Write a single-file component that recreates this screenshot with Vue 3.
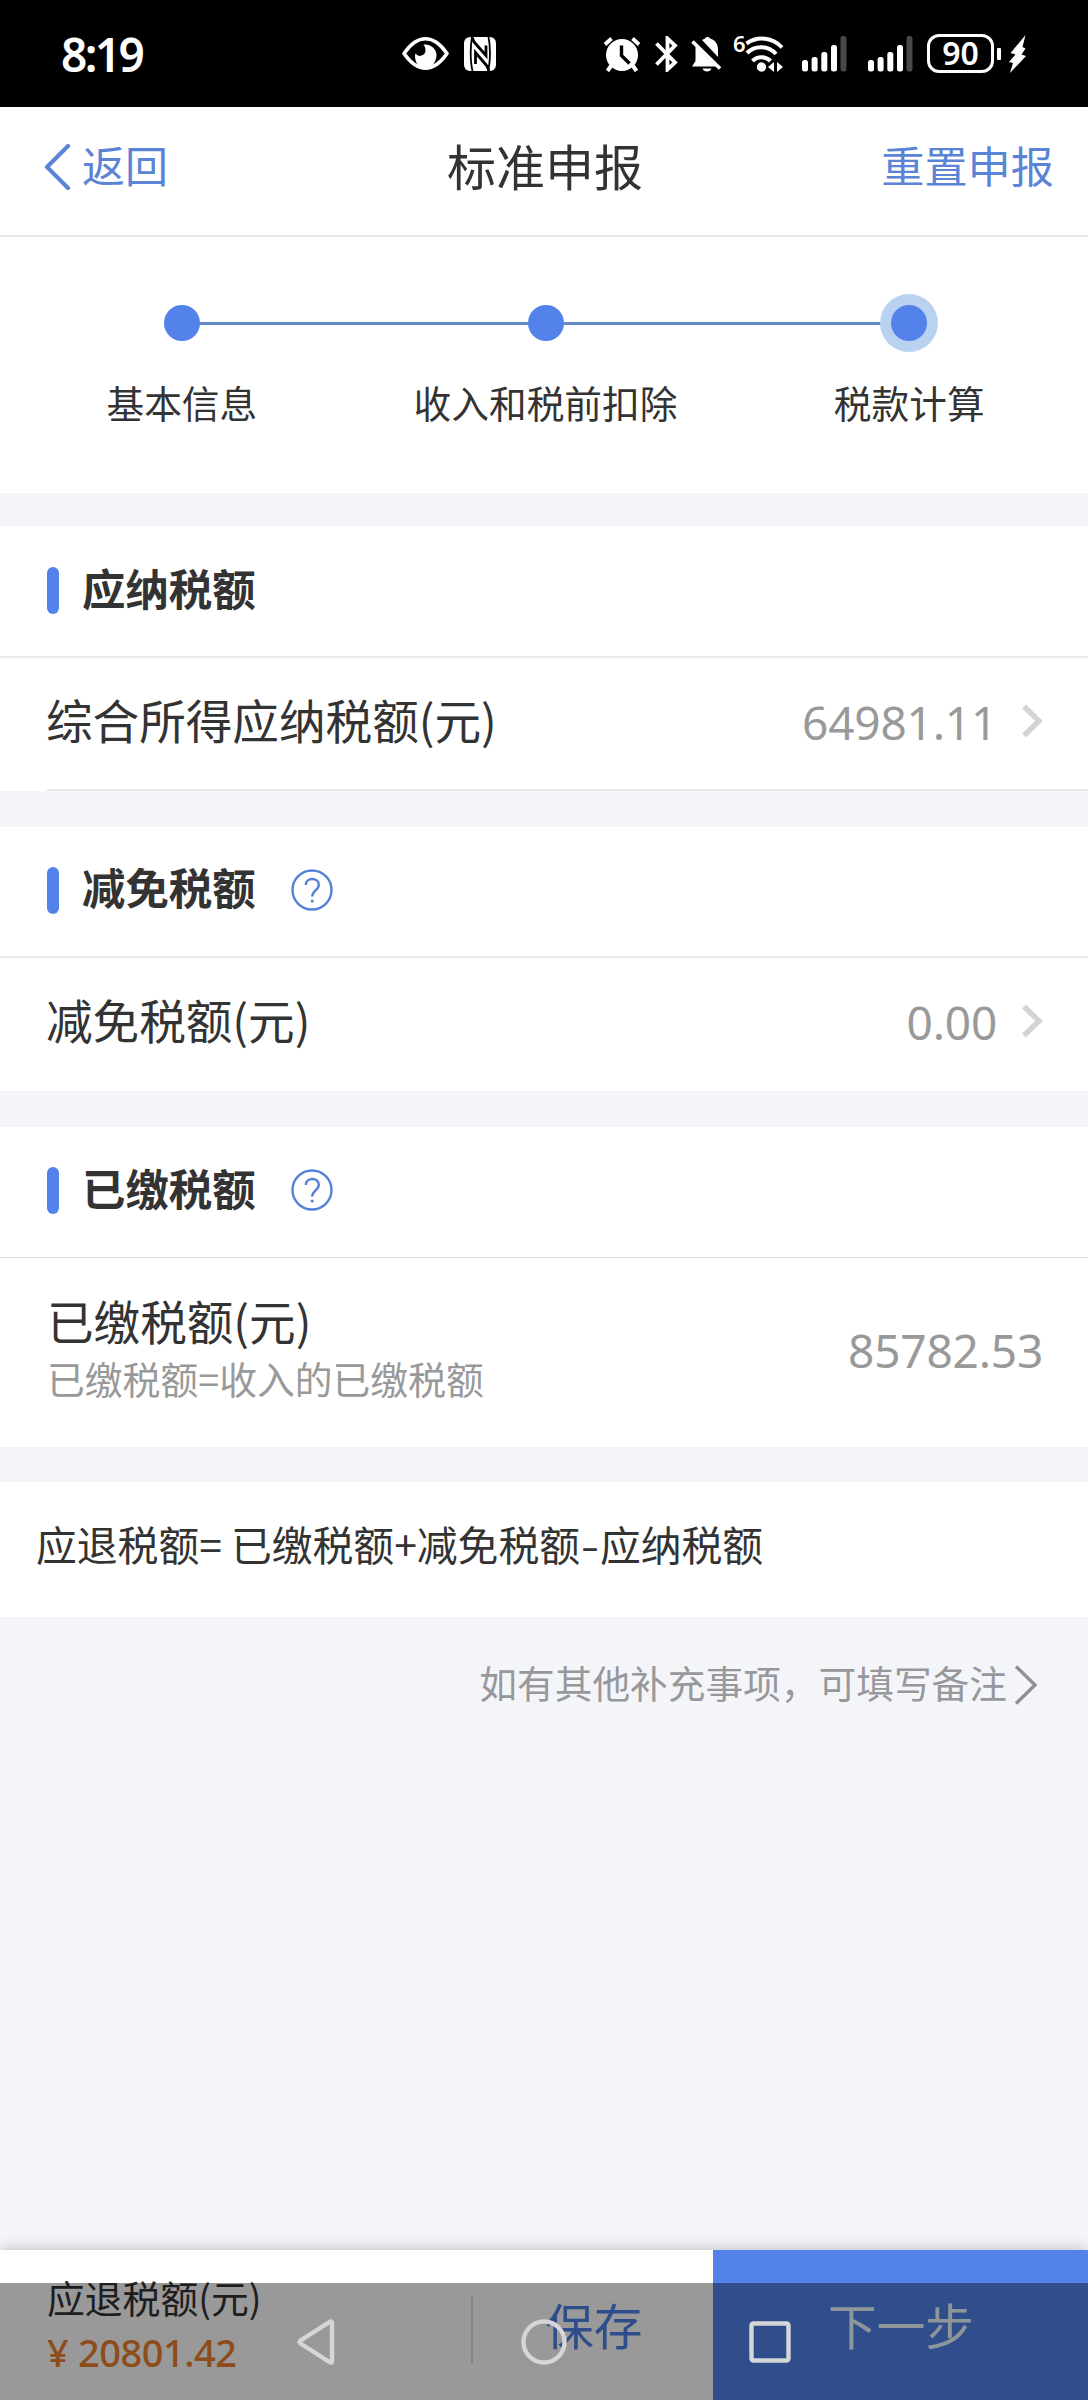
<script setup>
const steps = [
  { label: '基本信息', current: false },
  { label: '收入和税前扣除', current: false },
  { label: '税款计算', current: true },
]

const sections = [
  { title: '应纳税额', help: false, label: '综合所得应纳税额(元)', value: '64981.11', link: true, kind: 'payable' },
  { title: '减免税额', help: true, label: '减免税额(元)', value: '0.00', link: true, kind: 'relief' },
  { title: '已缴税额', help: true, label: '已缴税额(元)', hint: '已缴税额=收入的已缴税额', value: '85782.53', link: false, kind: 'paid' },
]

const signals = [1, 2]
const bars = [
  { x: 0, y: 24 },
  { x: 9.6, y: 21 },
  { x: 19.3, y: 16 },
  { x: 29, y: 9 },
]
</script>

<template>
  <div class="screen">
    <div class="status">
      <span class="clock">8:19</span>
      <svg class="eye" width="47" height="35" viewBox="0 0 47 35">
        <path d="M2 17.500C10 6 17 2.800 23.500 2.800S37 6 45 17.500C37 29 30 32.200 23.500 32.200S10 29 2 17.500Z" fill="none" stroke="#fff" stroke-width="3.600" stroke-linejoin="round" />
        <path d="M22.500 8.500a11 11 0 0 1 12 10.500c0 6-4 13-11 13s-10.500-5-10.500-12.500l.5-2a5.500 5.500 0 0 0 10-3c0-3-1-4.500-2-6Z" fill="#fff" />
      </svg>
      <svg class="nfc" width="32" height="34" viewBox="0 0 32 34">
        <rect width="32" height="34" rx="6" fill="#fff" />
        <path d="M8 0C6.200 9 6.200 25 8.500 34M24.500 0c2 9 2 25-.5 34" fill="none" stroke="#000" stroke-width="1.800" />
        <path d="M8 0l2 5 12 13.500V8.500M25 34l-2-5L11.500 15.500V27" fill="none" stroke="#000" stroke-width="2.800" />
      </svg>
      <svg class="alarm" width="38" height="36" viewBox="0 0 38 36">
        <path d="M2 8.500 8.500 2.500M36 8.500 29.500 2.500" stroke="#fff" stroke-width="3.800" />
        <path d="M8 30l-3.500 5M30 30l3.500 5" stroke="#fff" stroke-width="4" />
        <circle cx="19" cy="19" r="16" fill="#fff" />
        <path d="M18.500 9.500v10l8 8" fill="none" stroke="#000" stroke-width="3.400" />
      </svg>
      <svg class="bt" width="23" height="36" viewBox="0 0 23 36">
        <path d="M1.500 7.500 20 26.500 12.500 33.500V2.500L20 9.500 1.500 28.500" fill="none" stroke="#fff" stroke-width="3.800" />
      </svg>
      <svg class="bell" width="31" height="36" viewBox="0 0 31 36">
        <path d="M4.500 10.500 25 30.500H1l3.500-5.500ZM11 4l3-1.500C15 .5 18 .5 19 2.500c6 2 8 6 8 11V21ZM11.500 32.500h9c-1 4-8 4-9 0Z" fill="#fff" />
        <path d="M1.500 5.500 29 32.500" stroke="#fff" stroke-width="3.600" />
      </svg>
      <span class="gen">6</span>
      <svg class="wifi" width="39" height="36" viewBox="0 0 39 36">
        <g fill="none" stroke="#fff" stroke-width="4">
          <path d="M1.500 7.500a27 27 0 0 1 35.500 4" />
          <path d="M2 17a20 20 0 0 1 29 1" />
          <path d="M7.500 25a12.500 12.500 0 0 1 18 0" />
        </g>
        <circle cx="16.500" cy="31" r="4.700" fill="#fff" />
        <path d="M29 26v10l-6-5ZM32 26v10l6-5Z" fill="#fff" />
      </svg>
      <svg v-for="s in signals" :key="s" class="signal" :class="'sim' + s" width="45" height="36" viewBox="0 0 45 36">
        <rect v-for="b in bars" :key="b.x" :x="b.x" :y="b.y" width="6" :height="35.5 - b.y" rx="2.500" fill="#fff" />
        <rect x="38.500" y="0" width="6" height="35.500" rx="2.500" fill="#484848" />
      </svg>
      <span class="battery">90</span>
      <span class="cap"></span>
      <svg class="bolt" width="17" height="38" viewBox="0 0 17 38">
        <path d="M16.500 0 1.500 18l5 1.500L0 27l4 1L1 38 17 21l-4.500-1.500 4-6-3-1.500Z" fill="#fff" />
      </svg>
    </div>

    <header class="bar">
      <div class="back">
        <svg width="27" height="46" viewBox="0 0 27 46"><path d="M24 2 3 23l21 21" fill="none" stroke="#5b84d6" stroke-width="4.200" stroke-linecap="round" stroke-linejoin="round" /></svg>
        <span>返回</span>
      </div>
      <h1>标准申报</h1>
      <span class="reset">重置申报</span>
    </header>

    <div class="steps">
      <div v-for="s in steps" :key="s.label" class="step" :class="{ current: s.current }">
        <div class="track"><i class="dot"></i></div>
        <span class="step-label">{{ s.label }}</span>
      </div>
    </div>

    <section v-for="s in sections" :key="s.kind" class="card" :class="s.kind">
      <h2>
        <i class="mark"></i><span>{{ s.title }}</span>
        <svg v-if="s.help" class="help" width="42" height="42" viewBox="0 0 42 42" fill="none" stroke="#5482d8">
          <circle cx="21" cy="21" r="19.500" stroke-width="2.400" />
          <path d="M14.800 16c0-8 13-8 13 0 0 5-6.600 6-6.600 11.500" stroke-width="2.400" />
          <circle cx="21.200" cy="32" r="1.600" fill="#5482d8" stroke="none" />
        </svg>
      </h2>
      <div class="row">
        <div class="names">
          <div class="name">{{ s.label }}</div>
          <div v-if="s.hint" class="hint">{{ s.hint }}</div>
        </div>
        <span class="num">{{ s.value }}</span>
        <svg v-if="s.link" class="go" width="21" height="34" viewBox="0 0 21 34"><path d="M2 2.500 17 17 2 31.500" fill="none" stroke="#d3d3d3" stroke-width="5.400" /></svg>
      </div>
    </section>

    <div class="formula">应退税额= 已缴税额+减免税额<span class="minus">-</span>应纳税额</div>

    <div class="note">
      <span>如有其他补充事项，可填写备注</span>
      <svg width="24" height="40" viewBox="0 0 24 40"><path d="M2 1.500 21 20 2 38.500" fill="none" stroke="#8f9093" stroke-width="3.400" /></svg>
    </div>

    <footer class="footer">
      <div class="total">
        <div class="total-label">应退税额(元)</div>
        <div class="total-num"><span class="yen">¥</span>20801.42</div>
      </div>
      <i class="split"></i>
      <div class="save">保存</div>
      <div class="next">下一步</div>
    </footer>

    <nav class="sysnav">
      <svg class="n-back" width="40" height="48" viewBox="0 0 40 48"><path d="M36 4.600v38.800c0 1-1 1.500-2 1L4.500 25.500c-1.200-.8-1.200-2.200 0-3L34 3.600c1-.5 2 0 2 1Z" /></svg>
      <svg class="n-home" width="46" height="48" viewBox="0 0 46 48"><circle cx="23" cy="24" r="20.500" /></svg>
      <svg class="n-recent" width="42" height="48" viewBox="0 0 42 48"><rect x="2.500" y="5.500" width="37" height="37" rx="2" /></svg>
    </nav>
  </div>
</template>

<style>
body {
  margin: 0;
}
</style>

<style scoped>
.screen {
  position: relative;
  display: flex;
  flex-direction: column;
  width: 1088px;
  height: 2400px;
  overflow: hidden;
  background: #f4f5f9;
  color: #333;
  font-family: "Noto Sans CJK SC", "Noto Sans", sans-serif;
}
.status {
  display: flex;
  align-items: flex-start;
  height: 107px;
  flex: none;
  box-sizing: border-box;
  padding: 36px 0 0 61px;
  background: #000;
  color: #fff;
  font-family: "Noto Sans", sans-serif;
}
.status > * {
  flex: none;
}
.clock {
  width: 341px;
  margin-top: -5px;
  font-size: 46px;
  font-weight: 600;
  line-height: 46px;
  letter-spacing: -2.600px;
}
.nfc {
  margin: 1px 1px 0 15px;
}
.alarm {
  margin-left: 106px;
}
.bt {
  margin-left: 14px;
}
.bell {
  margin-left: 13px;
}
.gen {
  width: 11px;
  margin: -4px 0 0 11px;
  font-size: 22px;
  font-weight: 600;
  line-height: 22px;
}
.wifi {
  margin-left: 1px;
}
.sim1 {
  margin-left: 18px;
}
.sim2 {
  margin-left: 21px;
}
.battery {
  width: 67px;
  height: 39px;
  margin: -2px 0 0 14px;
  box-sizing: border-box;
  border: 3px solid #fff;
  border-radius: 12px;
  font-size: 32px;
  font-weight: 600;
  line-height: 32px;
  text-align: center;
}
.cap {
  width: 4px;
  height: 12px;
  margin: 12px 0 0 3px;
  border-radius: 1px;
  background: #fff;
}
.bolt {
  margin: -1px 0 0 8px;
}
.bar {
  display: flex;
  align-items: center;
  justify-content: space-between;
  height: 130px;
  flex: none;
  box-sizing: border-box;
  padding: 0 34px 8px 44px;
  border-bottom: 2px solid #e6e6e6;
  background: #fff;
}
.back {
  display: flex;
  align-items: center;
  width: 292px;
  color: #5b84d6;
  font-size: 43px;
  line-height: 60px;
}
.back svg {
  margin-right: 11px;
}
.back span,
.reset {
  margin-top: -6px;
}
h1 {
  margin: -4px 0 0;
  font-size: 49px;
  font-weight: 400;
  line-height: 60px;
}
.reset {
  width: 300px;
  color: #5b84d6;
  font-size: 43.200px;
  line-height: 60px;
  text-align: right;
}
.steps {
  display: flex;
  height: 256px;
  flex: none;
  box-sizing: border-box;
  padding-top: 57px;
  background: #fff;
}
.step {
  display: flex;
  flex: none;
  flex-direction: column;
  align-items: center;
  width: 363.700px;
}
.track {
  display: flex;
  align-items: center;
  justify-content: center;
  width: 100%;
  height: 58px;
  background: linear-gradient(#6389c6, #6389c6) no-repeat 0 28px / 100% 3px;
}
.step:first-child .track {
  background-position: 182px 28px;
}
.step.current .track {
  background-size: 50% 3px;
}
.dot {
  width: 36px;
  height: 36px;
  border-radius: 50%;
  background: #5383ea;
}
.current .dot {
  box-shadow: 0 0 0 11px #bad2f2;
}
.step-label {
  margin-top: 26px;
  font-size: 37.700px;
  line-height: 48px;
  white-space: nowrap;
}
.card {
  flex: none;
  margin-top: 33px;
  background: #fff;
}
.relief,
.paid {
  margin-top: 36px;
}
h2 {
  display: flex;
  align-items: center;
  height: 132px;
  margin: 0;
  box-sizing: border-box;
  padding: 0 0 8px 47px;
  border-bottom: 2px solid #ebebeb;
  font-size: 43.400px;
  font-weight: 700;
  line-height: 60px;
}
.mark {
  width: 12px;
  height: 47px;
  margin: 6px 23px 0 0;
  border-radius: 6px;
  background: #5383ea;
}
.relief .mark,
.paid .mark {
  margin-top: 5px;
}
.relief h2 span,
.paid h2 span {
  margin-top: -3px;
}
.help {
  margin: 4px 0 0 35px;
}
.row {
  display: flex;
  align-items: center;
  height: 133px;
  box-sizing: border-box;
  padding: 0 45px 6px 46px;
}
.payable .row {
  background: linear-gradient(#e8e9eb, #e8e9eb) no-repeat 47px 100% / 100% 2px;
}
.names {
  flex: 1;
}
.name {
  margin-top: -6px;
  font-size: 46.600px;
  line-height: 60px;
}
.num {
  color: #999;
  font-family: "Noto Sans", sans-serif;
  font-size: 46px;
  line-height: 60px;
  letter-spacing: -.2px;
}
.go {
  margin: -1px 0 0 25px;
}
.relief h2,
.paid h2 {
  height: 131px;
}
.paid h2 {
  border-bottom: 1px solid #dedede;
}
.paid .row {
  align-items: flex-start;
  height: 189px;
  padding-top: 38px;
}
.paid .num {
  margin-top: 24px;
}
.hint {
  color: #999;
  font-size: 37.800px;
  line-height: 56px;
}
.paid .names {
  padding-left: 1px;
}
.formula {
  height: 135px;
  flex: none;
  margin-top: 35px;
  box-sizing: border-box;
  padding: 32px 0 0 36px;
  background: #fff;
  font-size: 40.800px;
  line-height: 60px;
}
.minus {
  display: inline-block;
  width: 20px;
  text-align: center;
  transform: scaleX(1.3);
}
.note {
  display: flex;
  align-items: flex-start;
  justify-content: flex-end;
  flex: 1;
  padding: 48px 50px 0 0;
  color: #97989b;
  font-size: 37.700px;
  line-height: 38px;
}
.note span {
  margin-top: -2px;
}
.note svg {
  margin-left: 7px;
}
.footer {
  display: flex;
  height: 150px;
  flex: none;
  background: #fff;
  box-shadow: 0 -2px 12px rgba(0, 0, 0, .2);
}
.total {
  width: 471px;
  box-sizing: border-box;
  padding: 19px 0 0 47px;
}
.total-label {
  font-size: 37.800px;
  line-height: 56px;
}
.total-num {
  color: #ec7f30;
  font-family: "Noto Sans", sans-serif;
  font-size: 38px;
  font-weight: 500;
  line-height: 55px;
  letter-spacing: -.5px;
}
.yen {
  display: inline-block;
  width: 31px;
}
.split {
  width: 2px;
  height: 68px;
  margin-top: 46px;
  background: #dcdcdc;
}
.save,
.next {
  box-sizing: border-box;
  padding-top: 44px;
  font-size: 48.700px;
  line-height: 60px;
}
.save {
  width: 240px;
  padding-left: 72px;
  color: #4f80e6;
}
.next {
  flex: 1;
  padding-left: 115px;
  background: #5383ea;
  color: #ecfaff;
}
.sysnav {
  position: absolute;
  left: 0;
  right: 0;
  bottom: 0;
  display: flex;
  height: 117px;
  box-sizing: border-box;
  padding: 35px 0 0 296px;
  background: rgba(0, 0, 0, .4);
}
.sysnav svg {
  fill: none;
  stroke: #d6d6d9;
  stroke-width: 4.400;
}
.n-home {
  margin-left: 185px;
}
.n-recent {
  margin-left: 182px;
}
</style>
